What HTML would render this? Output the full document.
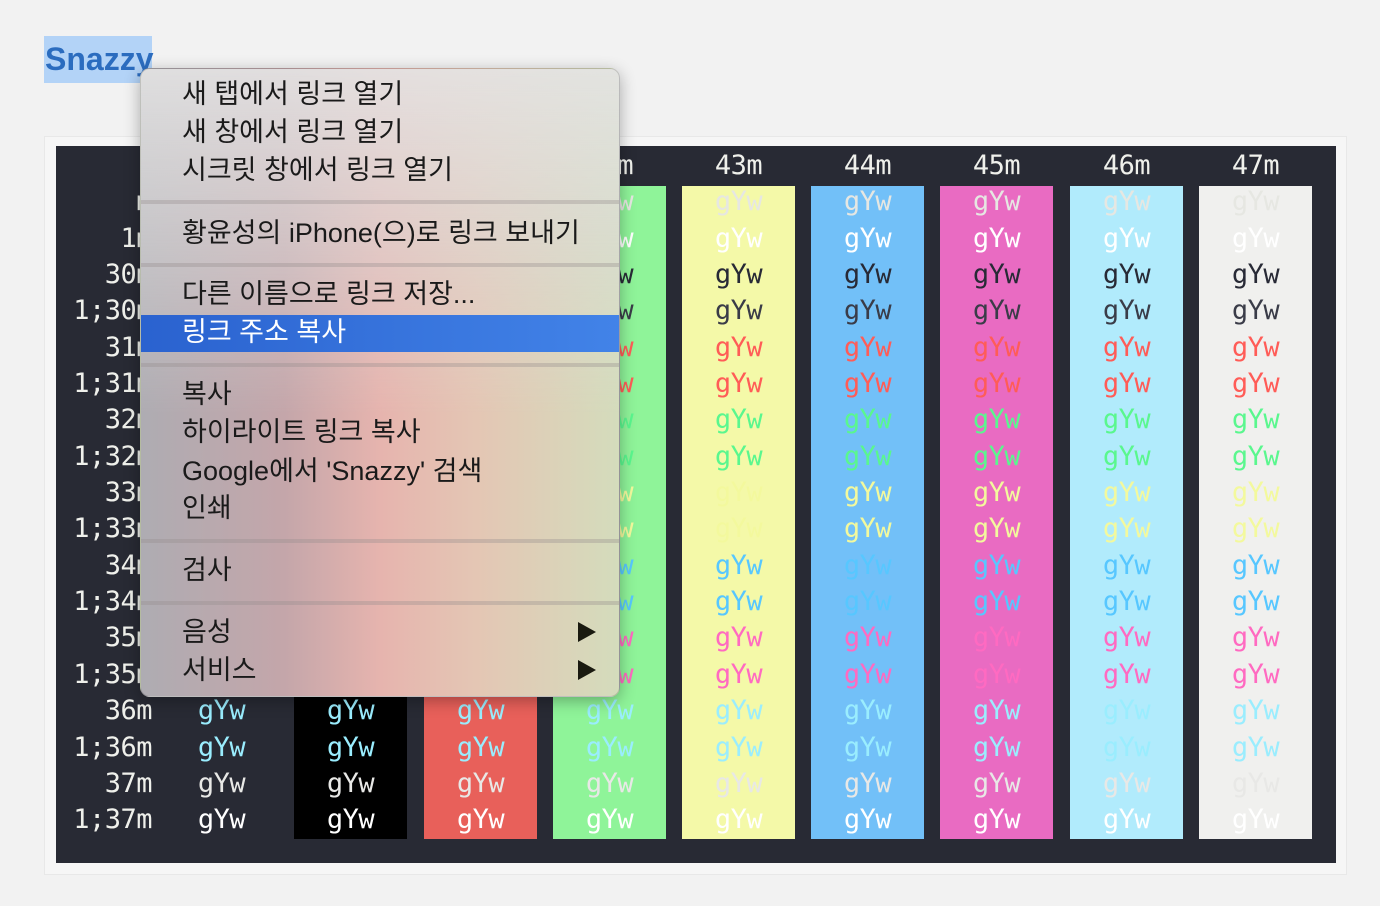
<!DOCTYPE html>
<html><head><meta charset="utf-8"><style>
*{margin:0;padding:0;box-sizing:border-box}
body{width:1380px;height:906px;background:#f2f2f2;position:relative;overflow:hidden;font-family:"Liberation Sans","Noto Sans CJK KR",sans-serif}
.h{position:absolute;left:44px;top:36px;height:47px;width:108px;background:#b3d3f7;color:#2b6cbf;font-weight:bold;font-size:32px;line-height:47px;padding-left:1px}
.box{position:absolute;left:44px;top:136px;width:1303px;height:739px;border:1px solid #e8e8e8;background:#f6f6f6}
.term{position:absolute;left:56px;top:146px;width:1280px;height:717px;background:#282a34}
.col{position:absolute;top:148px;width:113px;text-align:center;font-family:"DejaVu Sans Mono","Liberation Mono",monospace;font-size:27px;line-height:36.35px;letter-spacing:-0.5px}
.col span{display:block}
.lab{text-align:right;width:102px;color:#eff0eb}
.bg{position:absolute;top:186px;height:653px;width:113px}
.hd{color:#eff0eb}
.d{color:#e6e7e2}.db{color:#fff}
.k{color:#282a36}.kb{color:#3a3c48}
.r{color:#ff5c57}.rb{color:#ff5c57}
.g{color:#5af78e}.gb{color:#5af78e}
.y{color:#f3f99d}.yb{color:#f3f99d}
.b{color:#57c7ff}.bb{color:#57c7ff}
.m{color:#ff6ac1}.mb{color:#ff6ac1}
.c{color:#9aedfe}.cb{color:#9aedfe}
.w{color:#e8e8e6}.wb{color:#fff}
.menu{position:absolute;left:140px;top:68px;width:480px;height:629px;border-radius:10px;overflow:hidden;box-shadow:0 4px 16px rgba(0,0,0,.3);border:1px solid rgba(0,0,0,.15);
background:linear-gradient(180deg,rgba(228,228,228,.9) 0%,rgba(222,222,222,.55) 25%,rgba(220,220,220,0) 55%),linear-gradient(90deg,#aeacb2 0%,#c4a6aa 30%,#e6b4ae 50%,#e4c6b4 70%,#d4dcbc 100%)}
.it{position:absolute;left:41px;font-size:27px;line-height:38px;color:#1a1a1a;white-space:nowrap}
.sep{position:absolute;left:0;width:480px;height:4px;background:rgba(150,140,140,.35)}
.hl{position:absolute;left:0;top:246px;width:480px;height:37px;background:linear-gradient(90deg,#2a62cf,#4283e8)}
.tri{position:absolute;left:437px;width:0;height:0;border-left:18px solid #1a1a10;border-top:10px solid transparent;border-bottom:10px solid transparent}
</style></head><body>
<div class="h">Snazzy</div>
<div class="box"></div>
<div class="term"></div>
<div class="bg" style="left:294px;background:#000"></div>
<div class="bg" style="left:424px;background:#e8605a"></div>
<div class="bg" style="left:553px;background:#8ff499"></div>
<div class="bg" style="left:682px;background:#f4f9a8"></div>
<div class="bg" style="left:811px;background:#72c0f8"></div>
<div class="bg" style="left:940px;background:#e96bc2"></div>
<div class="bg" style="left:1070px;background:#b1ebfc"></div>
<div class="bg" style="left:1199px;background:#f0f0ee"></div>

<div class="col lab" style="left:50px"><span>&nbsp;</span><span>m</span><span>1m</span><span>30m</span><span>1;30m</span><span>31m</span><span>1;31m</span><span>32m</span><span>1;32m</span><span>33m</span><span>1;33m</span><span>34m</span><span>1;34m</span><span>35m</span><span>1;35m</span><span>36m</span><span>1;36m</span><span>37m</span><span>1;37m</span></div>

<div class="col" style="left:165px"><span class="hd">&nbsp;</span><span class="d">gYw</span><span class="db">gYw</span><span class="k">gYw</span><span class="kb">gYw</span><span class="r">gYw</span><span class="rb">gYw</span><span class="g">gYw</span><span class="gb">gYw</span><span class="y">gYw</span><span class="yb">gYw</span><span class="b">gYw</span><span class="bb">gYw</span><span class="m">gYw</span><span class="mb">gYw</span><span class="c">gYw</span><span class="cb">gYw</span><span class="w">gYw</span><span class="wb">gYw</span></div>
<div class="col" style="left:294px"><span class="hd">40m</span><span class="d">gYw</span><span class="db">gYw</span><span class="k">gYw</span><span class="kb">gYw</span><span class="r">gYw</span><span class="rb">gYw</span><span class="g">gYw</span><span class="gb">gYw</span><span class="y">gYw</span><span class="yb">gYw</span><span class="b">gYw</span><span class="bb">gYw</span><span class="m">gYw</span><span class="mb">gYw</span><span class="c">gYw</span><span class="cb">gYw</span><span class="w">gYw</span><span class="wb">gYw</span></div>
<div class="col" style="left:424px"><span class="hd">41m</span><span class="d">gYw</span><span class="db">gYw</span><span class="k">gYw</span><span class="kb">gYw</span><span class="r">gYw</span><span class="rb">gYw</span><span class="g">gYw</span><span class="gb">gYw</span><span class="y">gYw</span><span class="yb">gYw</span><span class="b">gYw</span><span class="bb">gYw</span><span class="m">gYw</span><span class="mb">gYw</span><span class="c">gYw</span><span class="cb">gYw</span><span class="w">gYw</span><span class="wb">gYw</span></div>
<div class="col" style="left:553px"><span class="hd">42m</span><span class="d">gYw</span><span class="db">gYw</span><span class="k">gYw</span><span class="kb">gYw</span><span class="r">gYw</span><span class="rb">gYw</span><span class="g">gYw</span><span class="gb">gYw</span><span class="y">gYw</span><span class="yb">gYw</span><span class="b">gYw</span><span class="bb">gYw</span><span class="m">gYw</span><span class="mb">gYw</span><span class="c">gYw</span><span class="cb">gYw</span><span class="w">gYw</span><span class="wb">gYw</span></div>
<div class="col" style="left:682px"><span class="hd">43m</span><span class="d">gYw</span><span class="db">gYw</span><span class="k">gYw</span><span class="kb">gYw</span><span class="r">gYw</span><span class="rb">gYw</span><span class="g">gYw</span><span class="gb">gYw</span><span class="y">gYw</span><span class="yb">gYw</span><span class="b">gYw</span><span class="bb">gYw</span><span class="m">gYw</span><span class="mb">gYw</span><span class="c">gYw</span><span class="cb">gYw</span><span class="w">gYw</span><span class="wb">gYw</span></div>
<div class="col" style="left:811px"><span class="hd">44m</span><span class="d">gYw</span><span class="db">gYw</span><span class="k">gYw</span><span class="kb">gYw</span><span class="r">gYw</span><span class="rb">gYw</span><span class="g">gYw</span><span class="gb">gYw</span><span class="y">gYw</span><span class="yb">gYw</span><span class="b">gYw</span><span class="bb">gYw</span><span class="m">gYw</span><span class="mb">gYw</span><span class="c">gYw</span><span class="cb">gYw</span><span class="w">gYw</span><span class="wb">gYw</span></div>
<div class="col" style="left:940px"><span class="hd">45m</span><span class="d">gYw</span><span class="db">gYw</span><span class="k">gYw</span><span class="kb">gYw</span><span class="r">gYw</span><span class="rb">gYw</span><span class="g">gYw</span><span class="gb">gYw</span><span class="y">gYw</span><span class="yb">gYw</span><span class="b">gYw</span><span class="bb">gYw</span><span class="m">gYw</span><span class="mb">gYw</span><span class="c">gYw</span><span class="cb">gYw</span><span class="w">gYw</span><span class="wb">gYw</span></div>
<div class="col" style="left:1070px"><span class="hd">46m</span><span class="d">gYw</span><span class="db">gYw</span><span class="k">gYw</span><span class="kb">gYw</span><span class="r">gYw</span><span class="rb">gYw</span><span class="g">gYw</span><span class="gb">gYw</span><span class="y">gYw</span><span class="yb">gYw</span><span class="b">gYw</span><span class="bb">gYw</span><span class="m">gYw</span><span class="mb">gYw</span><span class="c">gYw</span><span class="cb">gYw</span><span class="w">gYw</span><span class="wb">gYw</span></div>
<div class="col" style="left:1199px"><span class="hd">47m</span><span class="d">gYw</span><span class="db">gYw</span><span class="k">gYw</span><span class="kb">gYw</span><span class="r">gYw</span><span class="rb">gYw</span><span class="g">gYw</span><span class="gb">gYw</span><span class="y">gYw</span><span class="yb">gYw</span><span class="b">gYw</span><span class="bb">gYw</span><span class="m">gYw</span><span class="mb">gYw</span><span class="c">gYw</span><span class="cb">gYw</span><span class="w">gYw</span><span class="wb">gYw</span></div>

<div class="menu">
<div class="it" style="top:6px">새 탭에서 링크 열기</div>
<div class="it" style="top:44px">새 창에서 링크 열기</div>
<div class="it" style="top:82px">시크릿 창에서 링크 열기</div>
<div class="sep" style="top:131px"></div>
<div class="it" style="top:145px">황윤성의 iPhone(으)로 링크 보내기</div>
<div class="sep" style="top:194px"></div>
<div class="it" style="top:206px">다른 이름으로 링크 저장...</div>
<div class="hl"></div>
<div class="it" style="top:244px;color:#fff">링크 주소 복사</div>
<div class="sep" style="top:294px"></div>
<div class="it" style="top:306px">복사</div>
<div class="it" style="top:344px">하이라이트 링크 복사</div>
<div class="it" style="top:383px">Google에서 'Snazzy' 검색</div>
<div class="it" style="top:420px">인쇄</div>
<div class="sep" style="top:470px"></div>
<div class="it" style="top:482px">검사</div>
<div class="sep" style="top:532px"></div>
<div class="it" style="top:544px">음성</div>
<div class="tri" style="top:553px"></div>
<div class="it" style="top:582px">서비스</div>
<div class="tri" style="top:591px"></div>
</div>
</body></html>
